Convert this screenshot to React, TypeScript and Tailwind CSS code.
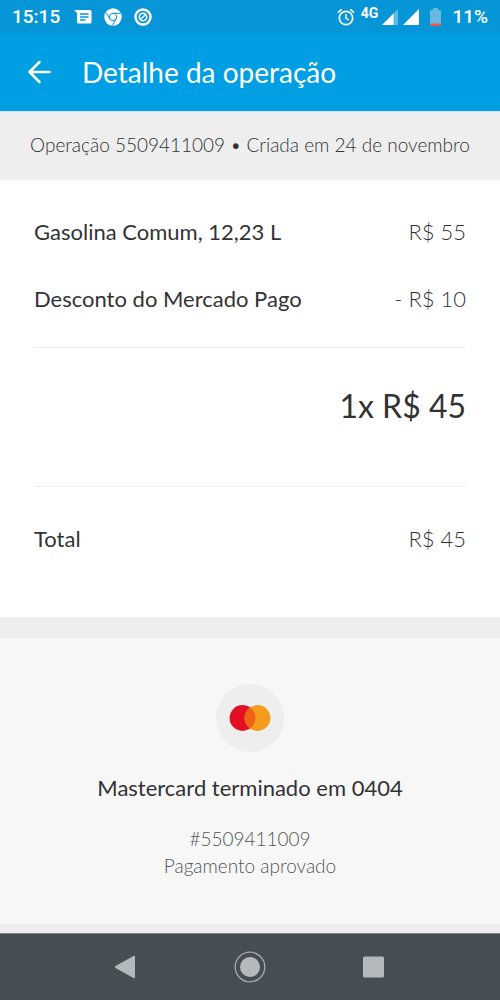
import React from 'react';

interface OperationItem {
  label: string;
  value: string;
}

const items: OperationItem[] = [
  { label: 'Gasolina Comum, 12,23 L', value: 'R$ 55' },
  { label: 'Desconto do Mercado Pago', value: '- R$ 10' },
];

const MessageIcon: React.FC = () => (
  <svg viewBox="0 0 18 16" className="h-4 w-[18px]" fill="none" aria-hidden="true">
    <path d="M0 1h16a1.5 1.5 0 0 1 1.500 1.500v10.500a1.500 1.500 0 0 1-1.500 1.500H4.500A1.500 1.500 0 0 1 3 13V4z" fill="#fff" />
    <path d="M6 5h8.500M6 8h8.500M6 11h5.500" stroke="#0696d7" strokeWidth="1.300" />
  </svg>
);

const ChromeIcon: React.FC = () => (
  <svg viewBox="0 0 18 18" className="size-[18px]" fill="none" aria-hidden="true">
    <circle cx="9" cy="9" r="8.700" fill="#fff" />
    <g stroke="#0696d7" strokeWidth="1">
      <circle cx="9" cy="9" r="3.700" />
      <path d="M9 5.300h7.700M12.200 10.900L8.400 17.500M5.800 10.900L2 4.300" />
    </g>
  </svg>
);

const BlockedIcon: React.FC = () => (
  <svg viewBox="0 0 18 18" className="size-[18px]" fill="none" stroke="#fff" aria-hidden="true">
    <circle cx="9" cy="9" r="7.500" strokeWidth="2.400" />
    <circle cx="9" cy="9" r="3.700" strokeWidth="1.600" />
    <path d="M6.500 11.500l5-5" strokeWidth="1.600" />
  </svg>
);

const AlarmIcon: React.FC = () => (
  <svg viewBox="0 0 18 18" className="size-[18px]" fill="none" stroke="#fff" aria-hidden="true">
    <circle cx="9" cy="10" r="6.700" strokeWidth="1.700" />
    <path d="M9 6v4.300l3 1.900" strokeWidth="1.400" />
    <path d="M.9 4.600L4.700 1.400M17.100 4.600l-3.800-3.200" strokeWidth="1.700" />
  </svg>
);

const SignalIcon: React.FC<{ weak?: boolean }> = ({ weak }) => (
  <svg viewBox="0 0 16 16" className="size-4" fill="#fff" aria-hidden="true">
    <path d="M0 16L16 0v16z" opacity={weak ? 0.35 : 1} />
    {weak && <path d="M0 16L11.500 4.500V16z" />}
  </svg>
);

const BatteryIcon: React.FC = () => (
  <svg viewBox="0 0 11 18" className="h-[18px] w-[11px]" aria-hidden="true">
    <path d="M3 0h5v2h2a1 1 0 0 1 1 1v13H0V3a1 1 0 0 1 1-1h2z" fill="#68b8e2" />
    <path d="M0 15.500h11V17a1 1 0 0 1-1 1H1a1 1 0 0 1-1-1z" fill="#ee5948" />
  </svg>
);

const StatusBar: React.FC = () => (
  <div className="flex h-[33px] items-center justify-between bg-[#0696d7] px-3 pt-px font-['Roboto',sans-serif] text-[19px] font-medium text-white">
    <div className="flex items-center gap-3">
      <span className="mr-0.5">15:15</span>
      <MessageIcon />
      <ChromeIcon />
      <BlockedIcon />
    </div>
    <div className="flex items-center">
      <AlarmIcon />
      <span className="ml-1.5 self-start text-sm leading-5 font-bold">4G</span>
      <span className="ml-1 flex gap-[5px]">
        <SignalIcon weak />
        <SignalIcon />
      </span>
      <span className="mx-[11px]">
        <BatteryIcon />
      </span>
      <span>11%</span>
    </div>
  </div>
);

const Header: React.FC = () => (
  <header className="flex h-[78px] items-center bg-[#009ee3] px-7 text-white">
    <button type="button" aria-label="Voltar" className="mr-[30px]">
      <svg viewBox="0 0 24 24" className="size-6" fill="none" stroke="currentColor" strokeWidth="2.500" strokeLinecap="round" strokeLinejoin="round" aria-hidden="true">
        <path d="M21.500 12H1.500M11.500 2L1.500 12l10 10" />
      </svg>
    </button>
    <h1 className="text-[28px] leading-8">Detalhe da operação</h1>
  </header>
);

const ItemRow: React.FC<OperationItem> = ({ label, value }) => (
  <div className="flex items-center justify-between text-[22px] leading-7">
    <dt>{label}</dt>
    <dd className="font-light">{value}</dd>
  </div>
);

const MastercardLogo: React.FC = () => (
  <div className="flex size-[68px] items-center justify-center rounded-full bg-[#eeeeee]">
    <svg viewBox="0 0 42 26" className="h-[26px] w-[42px]" role="img" aria-label="Mastercard">
      <circle cx="13.500" cy="13" r="12.900" fill="#e30f25" />
      <circle cx="28.500" cy="13" r="12.900" fill="#f59c1d" />
      <path d="M21 2.500a12.900 12.900 0 0 1 0 21 12.900 12.900 0 0 1 0-21z" fill="#ee6218" />
    </svg>
  </div>
);

const NavigationBar: React.FC = () => (
  <nav className="flex h-[67px] items-center justify-center gap-[92px] border-t border-[#798084] bg-[#454e53]">
    <button type="button" aria-label="Voltar">
      <svg viewBox="0 0 32 32" className="size-8" fill="#b5b9bb" aria-hidden="true">
        <path d="M5.500 15L23.500 5q1.500-.8 1.500.8v20.400q0 1.600-1.500.8L5.500 17q-1.500-1 0-2z" />
      </svg>
    </button>
    <button type="button" aria-label="Início">
      <svg viewBox="0 0 32 32" className="size-8" aria-hidden="true">
        <circle cx="16" cy="16" r="14.800" fill="none" stroke="#a5aaad" strokeWidth="1.300" />
        <circle cx="16" cy="16" r="10" fill="#b5b9bb" />
      </svg>
    </button>
    <button type="button" aria-label="Recentes">
      <svg viewBox="0 0 32 32" className="size-8" fill="#b5b9bb" aria-hidden="true">
        <rect x="5" y="5.500" width="21" height="21" rx="1.500" />
      </svg>
    </button>
  </nav>
);

const App: React.FC = () => (
  <div className="flex min-h-screen flex-col bg-[#eeeeee] font-['Lato',sans-serif] text-[#333333]">
    <StatusBar />
    <Header />

    <p className="border-t border-[#dcdfe4] px-4 pt-[19px] pb-[21px] text-center text-[19px] leading-7 font-light text-[#333333]">
      Operação 5509411009 • Criada em 24 de novembro
    </p>

    <main className="flex flex-1 flex-col">
      <div className="mb-[21px] bg-white px-[34px] pt-[38px] pb-16">
        <dl className="flex flex-col gap-[39px] border-b border-[#eeeeee] pb-[34px]">
          {items.map((item) => (
            <ItemRow key={item.label} {...item} />
          ))}
        </dl>
        <p className="border-b border-[#eeeeee] pt-[38px] pb-[60px] text-right text-[32px] leading-10">1x R$ 45</p>
        <dl className="pt-[38px]">
          <ItemRow label="Total" value="R$ 45" />
        </dl>
      </div>

      <section className="mb-[9px] flex flex-1 flex-col items-center bg-[#f7f7f7] px-8 pt-[46px] text-center">
        <MastercardLogo />
        <h2 className="mt-[22px] text-[22px] leading-7">Mastercard terminado em 0404</h2>
        <p className="mt-[23px] text-[19px] leading-[27px] font-light text-[#555555]">
          #5509411009
          <br />
          Pagamento aprovado
        </p>
      </section>
    </main>

    <NavigationBar />
  </div>
);

export default App;
